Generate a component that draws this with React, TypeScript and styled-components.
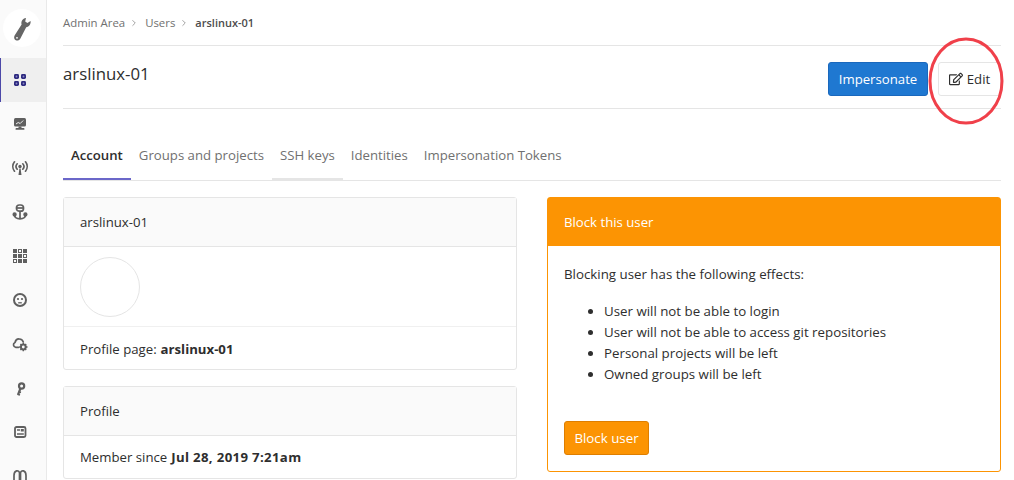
import React from "react";
import styled, { createGlobalStyle } from "styled-components";
import { FaRegEdit } from "react-icons/fa";
import { ChevronRight } from "lucide-react";

const GlobalStyle = createGlobalStyle`
  html, body {
    margin: 0;
    padding: 0;
    height: 480px;
    overflow: hidden;
    background: #fff;
  }
  body {
    font-family: "Open Sans", "Noto Sans", "Liberation Sans", sans-serif;
    font-size: 13.2px;
    color: #2e2e2e;
  }
`;

const INK = "#5f5f5f";

const navIcons = [
  <g fill="#2e2a80" key="a">
    <rect x="2" y="2" width="5" height="5" rx="1.4" />
    <rect x="9" y="2" width="5" height="5" rx="1.4" />
    <rect x="2" y="9" width="5" height="5" rx="1.4" />
    <rect x="9" y="9" width="5" height="5" rx="1.4" />
    <circle cx="4.5" cy="4.5" r="0.9" fill="#8a88c0" />
    <circle cx="11.5" cy="4.5" r="0.9" fill="#8a88c0" />
    <circle cx="4.5" cy="11.5" r="0.9" fill="#8a88c0" />
    <circle cx="11.5" cy="11.5" r="0.9" fill="#8a88c0" />
  </g>,
  <g key="b">
    <rect x="2" y="2" width="12" height="8.5" rx="1.5" fill={INK} />
    <path d="M4 8l2.2-1.5 2 1 3-3" fill="none" stroke="#fff" strokeWidth="0.9" />
    <rect x="6.5" y="10.5" width="3" height="2" fill={INK} />
    <rect x="3.5" y="12" width="9" height="1.8" rx=".9" fill={INK} />
  </g>,
  <g key="c" fill="none" stroke={INK} strokeWidth="1.7" strokeLinecap="round">
    <circle cx="8" cy="6.5" r="1.7" fill={INK} stroke="none" />
    <path d="M5.2 3.800a4 4 0 0 0 0 5.400M10.800 3.800a4 4 0 0 1 0 5.400M2.500 1.800a7.500 7.500 0 0 0 0 9.400M13.500 1.800a7.500 7.500 0 0 1 0 9.400" />
    <path d="M7.400 8.500h1.200l.9 6.500h-3z" fill={INK} stroke="none" />
  </g>,
  <g key="d" fill="none" stroke={INK} strokeWidth="1.7">
    <rect x="4.5" y="1" width="7" height="6.2" rx="2.8" />
    <path d="M4.500 4h7" />
    <path d="M8 7v8M2.300 10.500c.2 3 2.800 4.300 5.700 4.300s5.500-1.300 5.700-4.300" />
    <circle cx="2.6" cy="10.5" r="1.3" fill={INK} />
    <circle cx="13.4" cy="10.5" r="1.3" fill={INK} />
  </g>,
  <g key="e" fill={INK}>
    {[1, 6, 11].map((y) =>
      [1, 6, 11].map((x) =>
        (x === 6 && y === 1) || (x === 11 && y === 6) || (x === 1 && y === 11) ? (
          <rect key={`${x}-${y}`} x={x + 0.5} y={y + 0.5} width="3" height="3" fill="none" stroke={INK} />
        ) : (
          <rect key={`${x}-${y}`} x={x} y={y} width="4" height="4" />
        ),
      ),
    )}
  </g>,
  <g key="f">
    <circle cx="8" cy="8" r="6" fill="none" stroke={INK} strokeWidth="2" />
    <circle cx="6" cy="7" r="1.1" fill={INK} />
    <circle cx="10" cy="7" r="1.1" fill={INK} />
    <path d="M6.200 10.800h3.600" stroke={INK} strokeWidth="1.3" />
  </g>,
  <g key="g">
    <path d="M6.500 11.300H3.800a2.500 2.500 0 0 1-.8-4.800C3.600 4.200 5.400 2.800 7.300 3c2 .2 3.500 1.300 4 3" fill="none" stroke={INK} strokeWidth="1.7" strokeLinecap="round" />
    <circle cx="11.3" cy="11" r="2.4" fill="none" stroke={INK} strokeWidth="2" />
    <path d="M11.300 6.800v1.500M11.300 13.700v1.500M7.100 11h1.500M14 11h1.500M8.400 8.100l1 1M13.200 12.900l1 1M14.200 8.100l-1 1M9.400 12.900l-1 1" stroke={INK} strokeWidth="1.4" />
  </g>,
  <g key="h" fill="none" stroke={INK}>
    <circle cx="9.6" cy="6" r="2.6" strokeWidth="2.2" />
    <path d="M8.400 8.500L6 14.800" strokeWidth="2.2" />
    <path d="M5.600 14.300l2.400.8M6.800 11.800l2.200.7" strokeWidth="1.6" />
  </g>,
  <g key="i">
    <rect x="3" y="3" width="10.5" height="10" rx="1.5" fill="none" stroke={INK} strokeWidth="1.8" />
    <rect x="8.8" y="5" width="3" height="2.5" fill={INK} />
    <path d="M5 6h3M5 10h6.800" stroke={INK} strokeWidth="1.3" />
  </g>,
  <g key="j" fill="none" stroke={INK} strokeWidth="1.7">
    <path d="M2 16V7.500c0-5.500 5-6 5.500-2.500V16M8.500 16V5C9 1.500 14 2 14 7.500V16" />
  </g>,
];

function App() {
  return (
    <Page>
      <GlobalStyle />
      <Sidebar>
        <LogoCircle>
          <svg width="24" height="30" viewBox="0 0 24 30">
            <path
              d="M16 5C12.500 5.500 10.800 8.600 11.600 11.600L4.600 22.400C3.600 24.400 4.200 26.400 5.800 27.200C7.600 28 9.400 27.200 10.400 25.400L16.200 14.200C19 13.800 21 11.200 20.600 8L17.400 10L15.200 8.600Z"
              fill="#666"
            />
            <circle cx="7" cy="24.800" r="0.9" fill="#fff" />
          </svg>
        </LogoCircle>
        {navIcons.map((icon, index) => (
          <NavItem key={index} $active={index === 0}>
            <svg width="16" height="16" viewBox="0 0 16 16">
              {icon}
            </svg>
          </NavItem>
        ))}
      </Sidebar>
      <Content>
        <Breadcrumbs>
          <Crumb>Admin Area</Crumb>
          <CrumbSep>
            <ChevronRight size={10} strokeWidth={2} />
          </CrumbSep>
          <Crumb>Users</Crumb>
          <CrumbSep>
            <ChevronRight size={10} strokeWidth={2} />
          </CrumbSep>
          <CrumbCurrent>arslinux-01</CrumbCurrent>
        </Breadcrumbs>
        <TitleRow>
          <Title>arslinux-01</Title>
          <Actions>
            <PrimaryButton>Impersonate</PrimaryButton>
            <EditButton>
              <FaRegEdit size={14} />
              Edit
            </EditButton>
          </Actions>
        </TitleRow>
        <Tabs>
          <Tab $active>Account</Tab>
          <Tab>Groups and projects</Tab>
          <Tab $hover>SSH keys</Tab>
          <Tab>Identities</Tab>
          <Tab>Impersonation Tokens</Tab>
        </Tabs>
        <Columns>
          <Column>
            <Card>
              <CardHeader>arslinux-01</CardHeader>
              <AvatarRow>
                <Avatar />
              </AvatarRow>
              <ProfileRow>
                Profile page: <strong>arslinux-01</strong>
              </ProfileRow>
            </Card>
            <Card>
              <CardHeader>Profile</CardHeader>
              <CardRow>
                Member since <DateValue>Jul 28, 2019 7:21am</DateValue>
              </CardRow>
            </Card>
          </Column>
          <Column>
            <WarningCard>
              <WarningHeader>Block this user</WarningHeader>
              <WarningBody>
                <WarningText>Blocking user has the following effects:</WarningText>
                <EffectList>
                  <li>User will not be able to login</li>
                  <li>User will not be able to access git repositories</li>
                  <li>Personal projects will be left</li>
                  <li>Owned groups will be left</li>
                </EffectList>
                <WarningButton>Block user</WarningButton>
              </WarningBody>
            </WarningCard>
          </Column>
        </Columns>
      </Content>
      <Annotation width="80" height="92" viewBox="0 0 80 92">
        <ellipse cx="40" cy="46" rx="36" ry="42" fill="none" stroke="#f0404a" strokeWidth="3" />
      </Annotation>
    </Page>
  );
}

export default App;

const Page = styled.div`
  position: relative;
  display: flex;
  width: 1014px;
  height: 480px;
  overflow: hidden;
`;

const Sidebar = styled.nav`
  flex: 0 0 47px;
  box-sizing: border-box;
  height: 480px;
  background: #fafafa;
  border-right: 1px solid #e9e9e9;
  overflow: hidden;
`;

const LogoCircle = styled.div`
  display: flex;
  align-items: center;
  justify-content: center;
  width: 38px;
  height: 38px;
  margin: 9px 0 11px 3px;
  border-radius: 50%;
  background: #fff;
`;

const NavItem = styled.div<{ $active?: boolean }>`
  display: flex;
  align-items: center;
  height: 44px;
  box-sizing: border-box;
  padding-left: ${(p) => (p.$active ? "11px" : "12px")};
  background: ${(p) => (p.$active ? "#efefef" : "transparent")};
  border-left: ${(p) => (p.$active ? "1px solid #4b48a8" : "0")};
`;

const Content = styled.main`
  flex: 1;
  padding: 0 13px 0 16px;
  min-width: 0;
`;

const Breadcrumbs = styled.div`
  display: flex;
  align-items: center;
  height: 45px;
  border-bottom: 1px solid #e5e5e5;
  font-size: 11.4px;
`;

const Crumb = styled.span`
  color: #707070;
`;

const CrumbSep = styled.span`
  display: flex;
  margin: 0 6px 0 4px;
  color: #909090;
`;

const CrumbCurrent = styled.span`
  color: #4c4c4c;
  font-size: 11px;
  font-weight: 600;
`;

const TitleRow = styled.div`
  display: flex;
  justify-content: space-between;
  height: 62px;
  border-bottom: 1px solid #e5e5e5;
`;

const Title = styled.h1`
  margin: 16px 0 0;
  font-size: 16.8px;
  font-weight: 500;
  line-height: 24px;
  color: #2e2e2e;
`;

const Actions = styled.div`
  display: flex;
  gap: 10px;
  padding-top: 16px;
`;

const PrimaryButton = styled.button`
  width: 100px;
  height: 34px;
  padding: 0;
  border: 1px solid #1a68bd;
  border-radius: 3px;
  background: #1f78d1;
  color: #fff;
  font: inherit;
`;

const EditButton = styled.button`
  display: flex;
  align-items: center;
  justify-content: center;
  gap: 4px;
  width: 63px;
  height: 34px;
  padding: 0;
  border: 1px solid #e5e5e5;
  border-radius: 3px;
  background: #fff;
  color: #2e2e2e;
  font: inherit;
`;

const Tabs = styled.div`
  display: flex;
  height: 48px;
  margin-top: 23px;
  border-bottom: 1px solid #e5e5e5;
`;

const Tab = styled.div<{ $active?: boolean; $hover?: boolean }>`
  display: flex;
  align-items: center;
  padding: 0 8px;
  font-weight: ${(p) => (p.$active ? 600 : 400)};
  color: ${(p) => (p.$active ? "#2e2e2e" : "#707070")};
  border-bottom: 2px solid
    ${(p) => (p.$active ? "#6b67c9" : p.$hover ? "#e5e5e5" : "transparent")};
`;

const Columns = styled.div`
  display: grid;
  grid-template-columns: 454px 454px;
  gap: 30px;
  margin-top: 16px;
`;

const Column = styled.div`
  display: flex;
  flex-direction: column;
  gap: 16px;
`;

const Card = styled.section`
  border: 1px solid #e5e5e5;
  border-radius: 3px;
  background: #fff;
`;

const CardHeader = styled.div`
  display: flex;
  align-items: center;
  height: 48px;
  padding: 0 16px;
  background: #fafafa;
  border-bottom: 1px solid #e5e5e5;
`;

const AvatarRow = styled.div`
  height: 80px;
  padding: 10px 16px 0;
  box-sizing: border-box;
  border-bottom: 1px solid #f0f0f0;
`;

const Avatar = styled.div`
  width: 60px;
  height: 60px;
  box-sizing: border-box;
  border: 1px solid #e5e5e5;
  border-radius: 50%;
`;

const CardRow = styled.div`
  display: flex;
  align-items: center;
  gap: 4px;
  height: 42px;
  box-sizing: border-box;
  padding: 0 16px;
  strong {
    font-weight: 700;
  }
`;

const ProfileRow = styled(CardRow)`
  padding-top: 2px;
`;

const DateValue = styled.strong`
  letter-spacing: 0.35px;
`;

const WarningCard = styled.section`
  height: 275px;
  box-sizing: border-box;
  border: 1px solid #fc9403;
  border-radius: 3px;
`;

const WarningHeader = styled.div`
  display: flex;
  align-items: center;
  height: 48px;
  padding: 0 16px;
  background: #fc9403;
  color: #fff;
`;

const WarningBody = styled.div`
  padding: 18px 16px 16px;
  font-size: 13.3px;
`;

const WarningText = styled.p`
  margin: 0 0 16px;
  line-height: 21px;
`;

const EffectList = styled.ul`
  margin: 0 0 36px;
  padding-left: 40px;
  li {
    line-height: 21px;
  }
`;

const WarningButton = styled.button`
  width: 85px;
  height: 34px;
  padding: 0;
  border: 1px solid #de7e00;
  border-radius: 3px;
  background: #fc9403;
  color: #fff;
  font: inherit;
`;

const Annotation = styled.svg`
  position: absolute;
  left: 926px;
  top: 35px;
  pointer-events: none;
`;
